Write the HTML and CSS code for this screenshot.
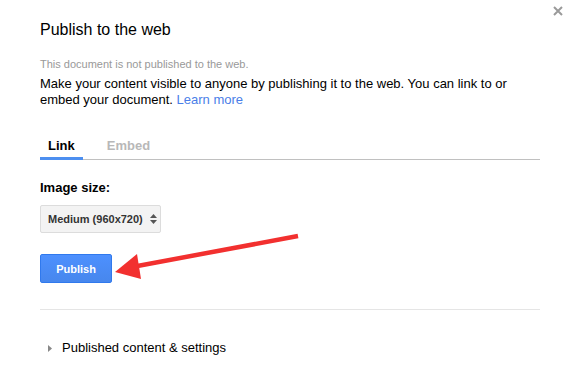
FILE: index.html
```html
<!DOCTYPE html>
<html lang="en">
<head>
    <meta charset="UTF-8">
    <meta name="viewport" content="width=device-width, initial-scale=1.0">
    <title>Publish to the web</title>
    <link rel="stylesheet" href="styles.css">
</head>
<body>
    <div class="dialog">
        <span class="close">
            <svg width="10" height="10" viewBox="0 0 10 10"><path d="M1 1L9 9M9 1L1 9" stroke="#9a9a9a" stroke-width="2"/></svg>
        </span>
        <h2 class="title">Publish to the web</h2>
        <p class="status">This document is not published to the web.</p>
        <p class="intro">Make your content visible to anyone by publishing it to the web. You can link to or embed your document. <a href="#">Learn more</a></p>

        <div class="tabs">
            <span class="tab active">Link</span>
            <span class="tab">Embed</span>
        </div>

        <div class="label">Image size:</div>
        <div class="select">
            <span>Medium (960x720)</span>
            <svg width="7" height="10" viewBox="0 0 7 10"><path d="M3.5 0L7 4H0Z M3.5 10L0 6H7Z" fill="#555"/></svg>
        </div>

        <button class="publish">Publish</button>

        <div class="divider"></div>

        <div class="expander">
            <svg width="4" height="7" viewBox="0 0 4 7"><path d="M0 0L4 3.5L0 7Z" fill="#888"/></svg>
            <span>Published content &amp; settings</span>
        </div>

        <!-- annotation arrow drawn over the dialog -->
        <svg class="arrow" width="579" height="376" viewBox="0 0 579 376">
            <line x1="298" y1="236" x2="132" y2="267" stroke="#f2302f" stroke-width="4.5"/>
            <path d="M115 272L137 254L141 279Z" fill="#f2302f"/>
        </svg>
    </div>
</body>
</html>
```

FILE: styles.css
```css
body {
    margin: 0;
    font-family: "Liberation Sans", Arial, sans-serif;
    color: #222;
    background: #fff;
    overflow: hidden;
}
.dialog {
    position: relative;
    height: 376px;
    padding: 20px 39px 0 40px;
    box-sizing: border-box;
}
.close {
    position: absolute;
    left: 553px;
    top: 6px;
    line-height: 0;
}
.title {
    margin: 0;
    font-size: 16px;
    font-weight: normal;
    line-height: 20px;
    color: #000;
}
.status {
    margin: 17px 0 0;
    font-size: 11px;
    line-height: 14px;
    color: #999;
}
.intro {
    margin: 5px 0 0;
    font-size: 13px;
    line-height: 16px;
    color: #000;
}
.intro a {
    color: #4a7ee8;
    text-decoration: none;
}
.tabs {
    display: flex;
    gap: 16px;
    margin-top: 30px;
    border-bottom: 1px solid #c0c0c0;
}
.tab {
    padding: 0 8px 3px;
    font-size: 13px;
    font-weight: bold;
    line-height: 16px;
    color: #b8b8b8;
    border-bottom: 3px solid transparent;
    margin-bottom: -1px;
}
.tab.active {
    color: #000;
    border-bottom-color: #4d8ff0;
}
.label {
    margin-top: 20px;
    font-size: 13px;
    font-weight: bold;
    line-height: 16px;
    color: #000;
}
.select {
    display: flex;
    align-items: center;
    gap: 7px;
    width: 121px;
    height: 28px;
    margin-top: 9px;
    padding: 0 0 0 7px;
    box-sizing: border-box;
    background: #f3f3f3;
    border: 1px solid #dcdcdc;
    border-radius: 2px;
    font-size: 11px;
    font-weight: bold;
    color: #333;
}
.publish {
    display: block;
    width: 72px;
    height: 29px;
    margin-top: 21px;
    padding: 0;
    background: linear-gradient(#4d90fe, #4787ed);
    border: 1px solid #3079ed;
    border-radius: 2px;
    font-family: inherit;
    font-size: 11px;
    font-weight: bold;
    color: #fff;
}
.divider {
    margin-top: 26px;
    border-top: 1px solid #e5e5e5;
}
.expander {
    display: flex;
    align-items: center;
    gap: 10px;
    margin-top: 30px;
    padding-left: 8px;
    font-size: 13px;
    line-height: 16px;
    color: #000;
}
.arrow {
    position: absolute;
    left: 0;
    top: 0;
    pointer-events: none;
}
```
